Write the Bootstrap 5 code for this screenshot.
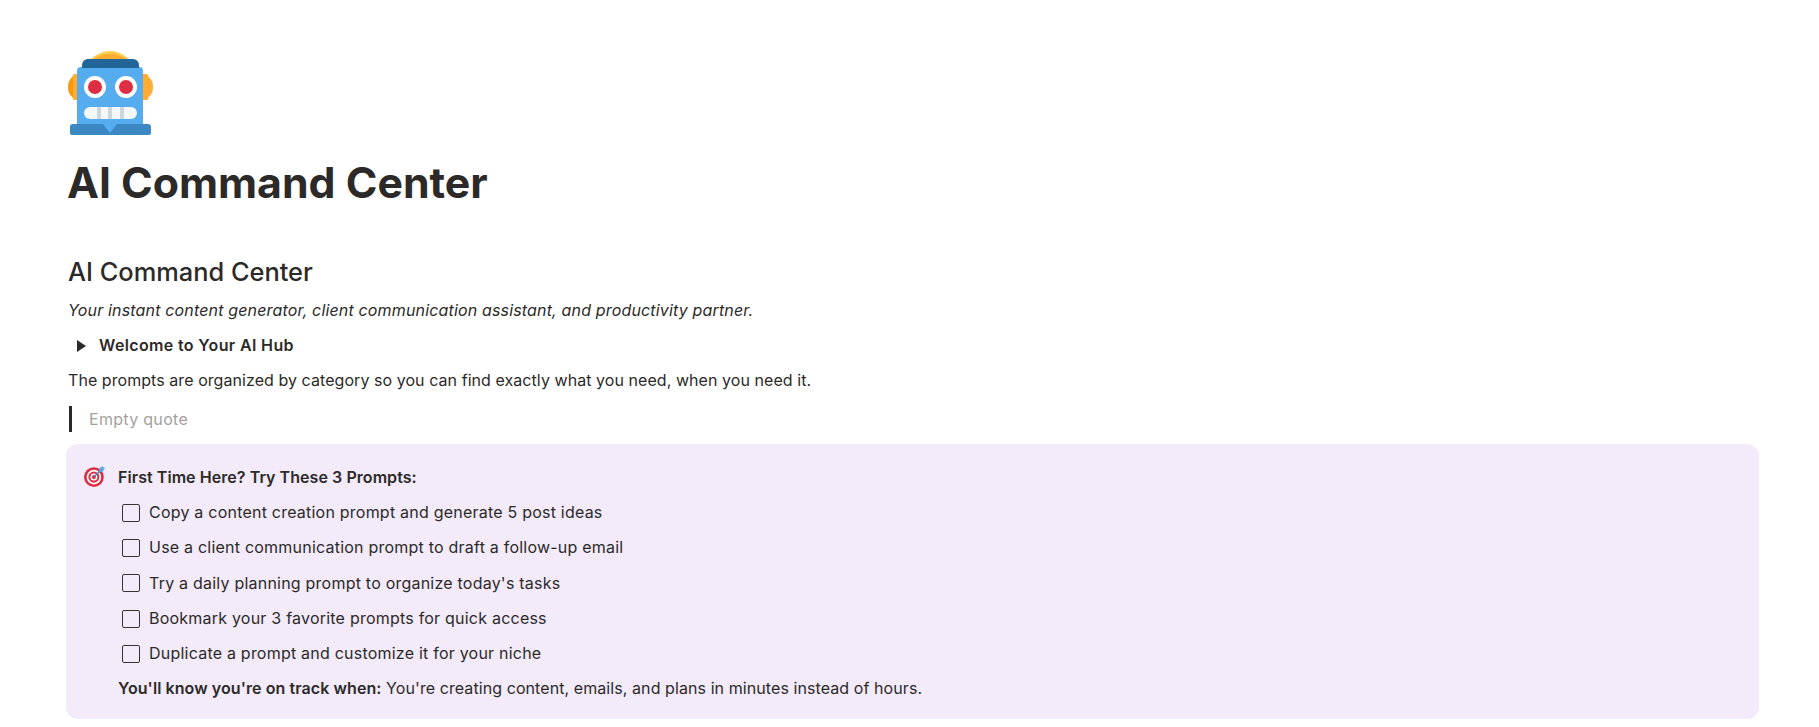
<!DOCTYPE html>
<html lang="en"><head><meta charset="utf-8"><title>AI Command Center</title>
<link href="https://cdn.jsdelivr.net/npm/bootstrap@5.3.0/dist/css/bootstrap.min.css" rel="stylesheet">
<style>
html,body{height:727px;overflow:hidden}
body{font-family:"Inter","Noto Sans",sans-serif;color:#2c2a28;background:#fff;font-size:16px;letter-spacing:.06px}
.page-wrap{padding:50px 60px 0 66px}
.hero-icon{display:block;width:88px;height:88px}
.page-title{font-weight:700;font-size:42.8px;line-height:54px;margin:18px 0 0 1px;color:#2c2a28;letter-spacing:0}
.sub-title{font-weight:500;font-size:25.4px;line-height:32px;margin:46px 0 0 2px;letter-spacing:0}
.line{line-height:35px;margin:0 0 0 2px}
.tagline{font-style:italic;margin-top:5px;letter-spacing:.16px}
.toggle-row{margin-left:11px;letter-spacing:.36px}
.tri{width:0;height:0;border-left:9px solid #2c2a28;border-top:6px solid transparent;border-bottom:6px solid transparent;margin-right:13px}
.semi{font-weight:600}
.quote-row{border-left:3px solid #2c2a28;margin:8px 0 0 3px;padding-left:17px;line-height:26px;color:#a5a29d;letter-spacing:.3px}
.callout-box{background:#f3eafa;border-radius:12px;margin-top:12px;padding:16px 18px 13px 18px}
.callout-emoji{width:21px;height:21px;margin:6px 13px 0 0;flex:none}
.check-box{width:18px;height:18px;border:1.5px solid #37352f;border-radius:2px;flex:none;margin-right:9px}
.check-row{margin-left:4px;line-height:35.3px;letter-spacing:.22px}
.note-line{letter-spacing:.08px}
</style></head><body>
<div class="page-wrap">
<svg class="hero-icon" viewBox="66 50 88 88" aria-hidden="true">
<path fill="#F79B0D" d="M74 76c-4 2-6 6-6 11s2 9 6 11z"/><path fill="#FFAC33" d="M73 77a2 2 0 0 1 2-3h3v26h-3a2 2 0 0 1-2-3z"/>
<path fill="#FFAC33" d="M147 76c4 2 6 6 6 11s-2 9-6 11z"/><path fill="#FFAC33" d="M142 74h4a2 2 0 0 1 2 3v20a2 2 0 0 1-2 3h-4z"/>
<path fill="#FFCC4D" d="M89 62c5-7 13-11 21-11s16 4 21 11z"/><path fill="#FFAC33" d="M90 63c5-6 12-9 20-9s15 3 20 9z"/>
<path fill="#55ACEE" d="M81 67h58a4 4 0 0 1 4 4v63H77V71a4 4 0 0 1 4-4z"/>
<path fill="#226699" d="M88 59h45a6 6 0 0 1 6 6v3H82v-3a6 6 0 0 1 6-6z"/>
<circle cx="95" cy="87" r="11" fill="#fff"/><circle cx="126" cy="87" r="11" fill="#fff"/>
<circle cx="95" cy="87" r="7" fill="#DD2E44"/><circle cx="126" cy="87" r="7" fill="#DD2E44"/>
<rect x="84" y="107" width="53" height="12" rx="6" fill="#F5F8FA"/>
<path fill="#CCD6DD" d="M97 107h4v12h-4zM108 107h4v12h-4zM120 107h4v12h-4z"/>
<path fill="#3B88C3" d="M73 124h30l7 9 7-9h31a3 3 0 0 1 3 3v6a2 2 0 0 1-2 2H72a2 2 0 0 1-2-2v-6a3 3 0 0 1 3-3z"/>
</svg>
<h1 class="page-title">AI Command Center</h1>
<h2 class="sub-title">AI Command Center</h2>
<p class="line tagline">Your instant content generator, client communication assistant, and productivity partner.</p>
<div class="line toggle-row d-flex align-items-center"><span class="tri"></span><span class="semi">Welcome to Your AI Hub</span></div>
<p class="line">The prompts are organized by category so you can find exactly what you need, when you need it.</p>
<div class="quote-row">Empty quote</div>
<div class="callout-box d-flex">
<svg class="callout-emoji" viewBox="0 0 36 36" aria-hidden="true">
<circle cx="17" cy="19" r="17" fill="#DD2E44"/><circle cx="17" cy="19" r="12.500" fill="#fff"/><circle cx="17" cy="19" r="9.500" fill="#DD2E44"/><circle cx="17" cy="19" r="6" fill="#fff"/><circle cx="17" cy="19" r="3.500" fill="#DD2E44"/>
<path d="M17 19 30 6" stroke="#3B88C3" stroke-width="2.500"/><path fill="#55ACEE" d="M26 4l7-4 0 3 3 0-4 7-6 0z"/>
</svg>
<div class="flex-grow-1">
<div class="line m-0 semi">First Time Here? Try These 3 Prompts:</div>
<div class="line check-row d-flex align-items-center"><span class="check-box"></span>Copy a content creation prompt and generate 5 post ideas</div>
<div class="line check-row d-flex align-items-center"><span class="check-box"></span>Use a client communication prompt to draft a follow-up email</div>
<div class="line check-row d-flex align-items-center"><span class="check-box"></span>Try a daily planning prompt to organize today's tasks</div>
<div class="line check-row d-flex align-items-center"><span class="check-box"></span>Bookmark your 3 favorite prompts for quick access</div>
<div class="line check-row d-flex align-items-center"><span class="check-box"></span>Duplicate a prompt and customize it for your niche</div>
<p class="line note-line m-0"><span class="semi">You'll know you're on track when:</span> You're creating content, emails, and plans in minutes instead of hours.</p>
</div>
</div>
</div>
</body></html>
